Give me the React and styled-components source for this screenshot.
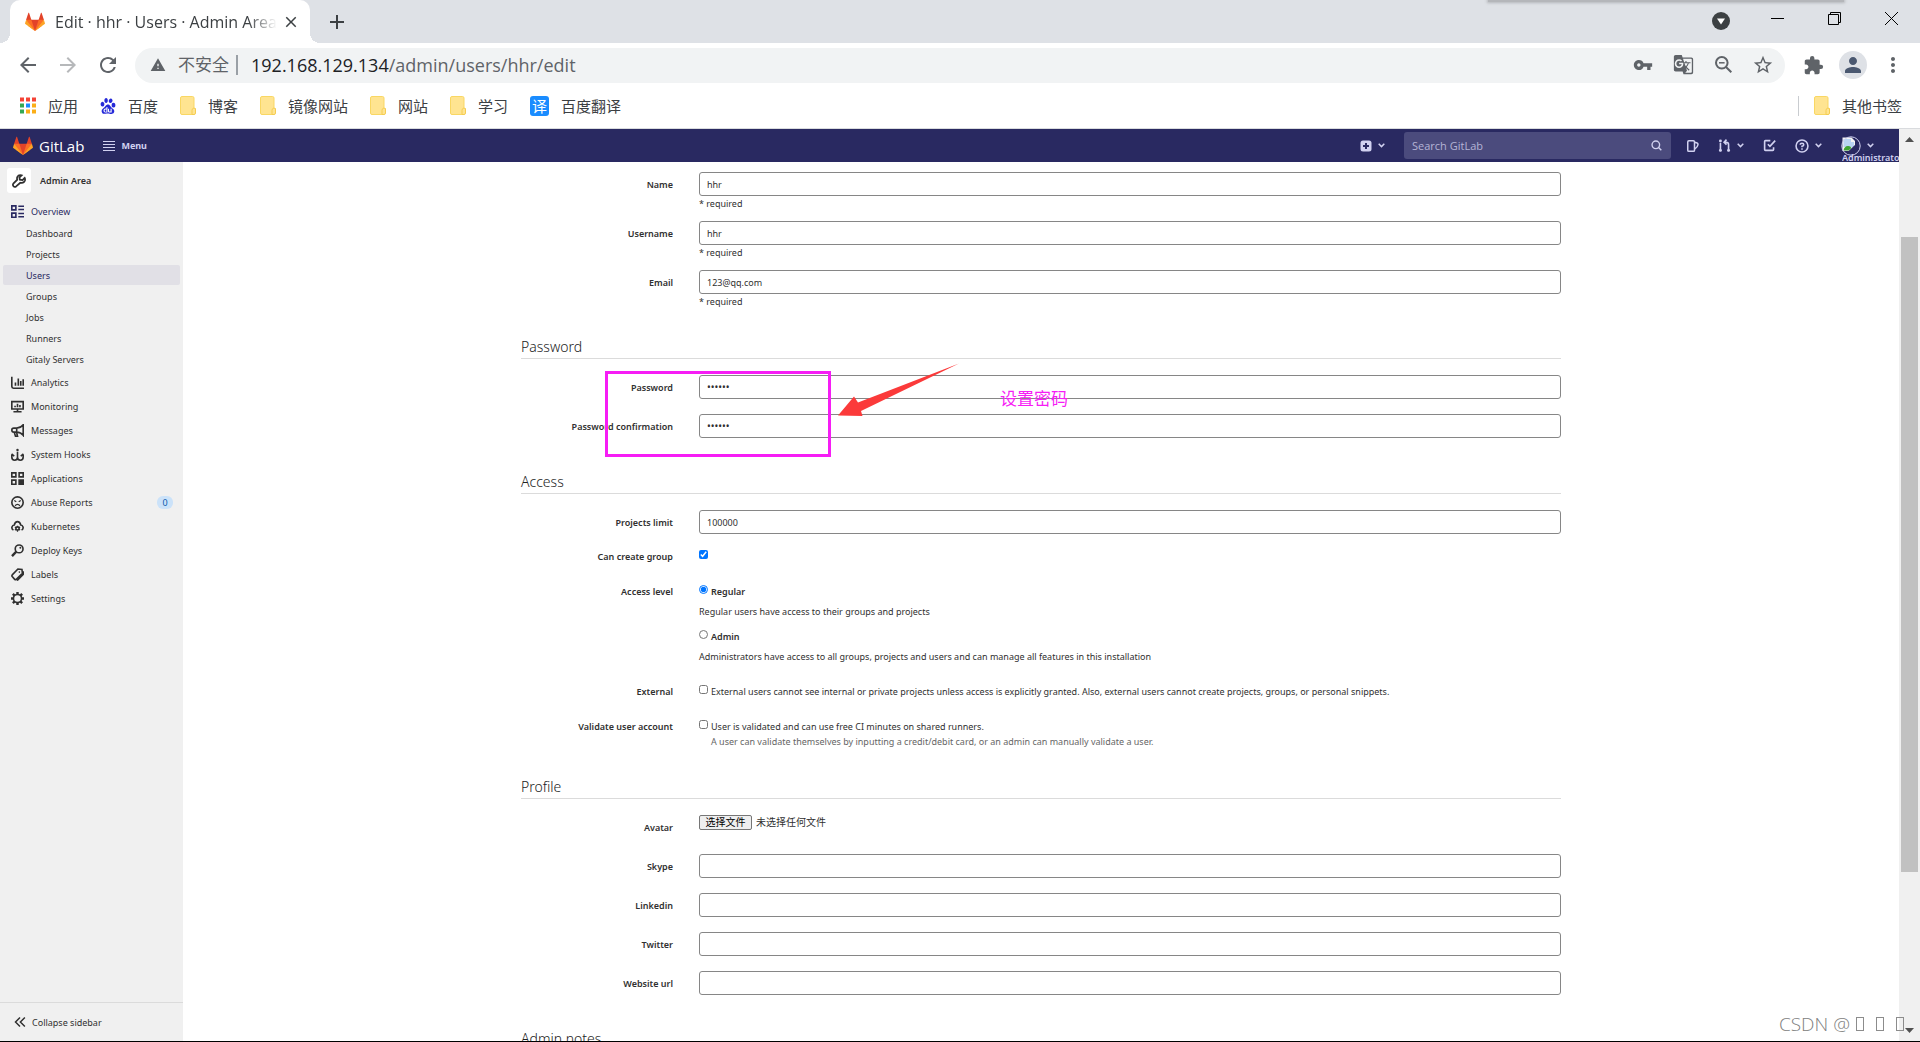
import { useRef } from "react";
import styled, { createGlobalStyle } from "styled-components";
import {
  MdArrowBack,
  MdArrowForward,
  MdRefresh,
  MdWarning,
  MdVpnKey,
  MdGTranslate,
  MdStarBorder,
  MdExtension,
  MdPerson,
  MdMoreVert,
  MdClose,
  MdAdd,
} from "react-icons/md";
import { SiBaidu } from "react-icons/si";

const GlobalStyle = createGlobalStyle`
  * {
    box-sizing: border-box;
  }

  body {
    margin: 0;
    overflow: hidden;
    background: #fff;
    font-family: "Open Sans", "Noto Sans CJK SC", sans-serif;
  }

  button {
    border: none;
    background: none;
    padding: 0;
    font: inherit;
    color: inherit;
  }

  a {
    color: inherit;
    text-decoration: none;
  }

  svg {
    flex: none;
    display: block;
  }
`;

const Window = styled.div`
  position: relative;
  display: flex;
  flex-direction: column;
  height: 100vh;
  overflow: hidden;
  border-bottom: 1px solid #000;
`;

/* browser chrome */

const TabStrip = styled.div`
  display: flex;
  flex: none;
  height: 43px;
  padding-left: 10px;
  background: #dee1e6;
  color: #3c4043;
`;

const StripShadow = styled.div`
  position: absolute;
  top: 0;
  right: 76px;
  width: 356px;
  height: 2px;
  background: #b4b6ba;
  box-shadow: 0 0 3px 1px #b4b6ba;
`;

const Tab = styled.div`
  position: relative;
  display: flex;
  align-items: center;
  width: 300px;
  padding: 0 12px 0 15px;
  border-radius: 10px 10px 0 0;
  background: #fff;

  &::before,
  &::after {
    content: "";
    position: absolute;
    bottom: 0;
    width: 10px;
    height: 10px;
  }

  &::before {
    left: -10px;
    background: radial-gradient(circle at 0 0, transparent 10px, #fff 10px);
  }

  &::after {
    right: -10px;
    background: radial-gradient(circle at 100% 0, transparent 10px, #fff 10px);
  }
`;

const TabTitle = styled.span`
  flex: 1;
  margin: 0 5px 0 10px;
  white-space: nowrap;
  font-size: 16px;
  line-height: 24px;
  mask-image: linear-gradient(to right, #000 87%, transparent);
`;

const NewTab = styled.button`
  display: flex;
  align-items: center;
  margin-left: 15px;
`;

const WindowButtons = styled.div`
  display: flex;
  align-items: center;
  margin-left: auto;
  height: 37px;
`;

const WindowButton = styled.button`
  display: flex;
  align-items: center;
  justify-content: center;
  width: 57px;
  height: 37px;
  color: #000;
`;

const TabSearch = styled(WindowButton)`
  height: 43px;
  padding-top: 5px;
`;

const Toolbar = styled.div`
  display: flex;
  flex: none;
  align-items: center;
  height: 45px;
  padding: 0 7px 0 8px;
  color: #5f6368;
`;

const ToolButton = styled.button`
  display: flex;
  flex: none;
  align-items: center;
  justify-content: center;
  width: 40px;
  height: 35px;
  padding-bottom: 1px;
  opacity: ${(props) => (props.disabled ? 0.45 : 1)};
  color: #5f6368;
`;

const Omnibox = styled.div`
  display: flex;
  flex: 1;
  align-items: center;
  height: 35px;
  margin: 0 8px 0 7px;
  padding: 0 2px 1px 15px;
  border-radius: 18px;
  background: #f1f3f4;
  font-size: 18px;
  line-height: 24px;
`;

const Insecure = styled.span`
  margin-left: 12px;
  padding-right: 7px;
  border-right: 2px solid #9aa0a6;
  font-size: 17px;
  line-height: 20px;
`;

const Url = styled.span`
  flex: 1;
  margin-left: 13px;
  padding-bottom: 1px;
  color: #5f6368;

  b {
    font-weight: 400;
    color: #202124;
  }
`;

const Profile = styled.span`
  display: flex;
  align-items: center;
  justify-content: center;
  width: 28px;
  height: 28px;
  border-radius: 50%;
  background: #dee1e6;
  color: #4a5870;
`;

const Bookmarks = styled.nav`
  display: flex;
  flex: none;
  align-items: center;
  gap: 22px;
  height: 41px;
  padding: 0 18px 5px 20px;
  border-bottom: 1px solid #d9dbde;
  color: #3c4043;
  font-size: 15px;
  line-height: 20px;
`;

const Bookmark = styled.a`
  display: flex;
  align-items: center;
  gap: 12px;
`;

const OtherBookmarks = styled(Bookmark)`
  margin-left: auto;
  height: 20px;
  padding-left: 15px;
  border-left: 1px solid #c9ccd0;
`;

const TranslateBadge = styled.span`
  width: 19px;
  border-radius: 3px;
  background: #1a8cff;
  color: #fff;
  text-align: center;
`;

/* page */

const Viewport = styled.div`
  display: flex;
  flex: 1;
  min-height: 0;
  font-family: "Noto Sans", "Noto Sans CJK SC", sans-serif;
`;

const Page = styled.div`
  display: flex;
  flex: 1;
  flex-direction: column;
  min-width: 0;
`;

const Navbar = styled.header`
  display: flex;
  flex: none;
  align-items: center;
  height: 33px;
  padding: 0 25px 0 13px;
  background: #292961;
  color: #d1d1f0;
`;

const Brand = styled.a`
  display: flex;
  align-items: center;
  gap: 6px;
  color: #fff;
  font-family: "Open Sans", sans-serif;
  font-size: 15px;
`;

const MenuButton = styled.button`
  display: flex;
  align-items: center;
  gap: 6px;
  margin-left: 19px;
  font-size: 9px;
  font-weight: 700;
`;

const NavActions = styled.div`
  display: flex;
  align-items: center;
  margin-left: auto;
`;

const NavButton = styled.button`
  display: flex;
  align-items: center;
  gap: 6px;
  margin-right: 19px;
`;

const SearchBox = styled.label`
  display: flex;
  align-items: center;
  width: 267px;
  height: 27px;
  margin-right: 16px;
  padding: 0 9px 0 8px;
  border-radius: 3px;
  background: #4b4b7d;

  input {
    flex: 1;
    min-width: 0;
    padding: 0;
    border: none;
    outline: none;
    background: none;
    color: #d1d1f0;
    font: 11px "Open Sans", sans-serif;
  }

  input::placeholder {
    color: #b4b4d6;
  }
`;

const UserButton = styled.button`
  position: relative;
  display: flex;
  align-items: center;
  gap: 6px;
`;

const AvatarAlt = styled.span`
  position: absolute;
  top: 16px;
  left: 1px;
  width: 57px;
  overflow: hidden;
  text-align: left;
  font-size: 9px;
  font-weight: 600;
  line-height: 11px;
`;

const Body = styled.div`
  display: flex;
  flex: 1;
  min-height: 0;
`;

const Sidebar = styled.aside`
  display: flex;
  flex: none;
  flex-direction: column;
  width: 183px;
  background: #f0f0f0;
  color: #303030;
  font-size: 9px;
`;

const SidebarTitle = styled.a`
  display: flex;
  align-items: center;
  gap: 9px;
  height: 37px;
  padding-left: 7px;
  font-weight: 600;
`;

const TitleIcon = styled.span`
  display: flex;
  align-items: center;
  justify-content: center;
  width: 24px;
  height: 25px;
  border-radius: 3px;
  background: #fff;
`;

const List = styled.ul`
  margin: 0;
  padding: 0;
  list-style: none;
`;

const Item = styled.a`
  display: flex;
  align-items: center;
  gap: 7px;
  height: 24px;
  padding: 0 10px 0 11px;
  color: ${(props) => (props.$active ? "#292961" : "inherit")};
`;

const Badge = styled.span`
  width: 16px;
  margin-left: auto;
  border-radius: 6px;
  background: #cbe2f9;
  color: #0b5cad;
  text-align: center;
  line-height: 13px;
`;

const SubItem = styled.a`
  display: block;
  height: 20px;
  margin: 0 3px 1px;
  padding-left: 23px;
  border-radius: 2px;
  background: ${(props) => (props.$active ? "#e1e0e6" : "none")};
  color: ${(props) => (props.$active ? "#292961" : "inherit")};
  line-height: 21px;
`;

const Collapse = styled.button`
  display: flex;
  align-items: center;
  gap: 6px;
  height: 39px;
  margin-top: auto;
  padding-left: 14px;
  border-top: 1px solid #dbdbdb;
`;

const Main = styled.main`
  flex: 1;
  min-width: 0;
  overflow: hidden;
  padding: 10px 16px 0;
`;

const Form = styled.form`
  max-width: 1040px;
  margin: 0 auto;
  color: #303030;
  font-size: 9px;
`;

const Section = styled.section`
  position: relative;
  margin-top: ${(props) => props.$top || 0}px;
`;

const Heading = styled.h2`
  margin: 0 0 16px;
  border-bottom: 1px solid #dbdbdb;
  color: #222;
  font-size: 14px;
  font-weight: 300;
  line-height: 23px;
`;

const Fields = styled.div`
  display: grid;
  gap: ${(props) => props.$gap || 13}px;
`;

const Row = styled.div`
  display: grid;
  grid-template-columns: 152px 1fr;
  column-gap: 26px;
  padding-bottom: ${(props) => (props.$choice ? 7 : 0)}px;
`;

const Caption = styled.label`
  text-align: right;
  font-weight: 600;
  line-height: ${(props) => (props.$choice ? 15 : 26)}px;
`;

const Input = styled.input`
  display: block;
  width: 100%;
  height: 24px;
  padding: 0 7px;
  border: 1px solid #868686;
  border-radius: 3px;
  outline: none;
  background: #fff;
  color: #303030;
  font: ${(props) => (props.type === "password" ? 10 : 9)}px "Noto Sans", sans-serif;
`;

const Required = styled.span`
  display: block;
  line-height: 16px;
`;

const Choice = styled.label`
  display: flex;
  align-items: flex-start;
  gap: 3px;
  font-weight: ${(props) => (props.$strong ? 600 : 400)};
  line-height: 15px;
`;

const Tick = styled.input`
  width: 9px;
  height: 9px;
  margin: 1px 0 0;
  accent-color: #0075ff;
`;

const Help = styled.p`
  margin: 5px 0 0;
  line-height: 15px;
`;

const Note = styled.p`
  margin: 0 0 0 12px;
  color: #666;
  line-height: 15px;
`;

const Level = styled.div`
  & + & {
    margin-top: 10px;
  }
`;

const FileField = styled.div`
  display: flex;
  align-items: flex-start;
  gap: 4px;
  font-size: 10px;
  line-height: 14px;

  input {
    display: none;
  }

  button {
    width: 53px;
    border: 1px solid #767676;
    border-radius: 2px;
    background: #efefef;
    color: #000;
    line-height: 13px;
  }
`;

/* marks laid over the password fields */

const Frame = styled.div`
  position: absolute;
  top: 36px;
  left: 84px;
  width: 226px;
  height: 86px;
  border: 3px solid #f61df5;
  pointer-events: none;
`;

const Arrow = styled.svg`
  position: absolute;
  top: 28px;
  left: 317px;
  pointer-events: none;
`;

const Remark = styled.span`
  position: absolute;
  top: 52px;
  left: 479px;
  color: #f61df5;
  font-size: 17px;
  line-height: 24px;
`;

const Scrollbar = styled.div`
  display: flex;
  flex: none;
  flex-direction: column;
  align-items: center;
  width: 21px;
  background: #f0f0f0;
`;

const ScrollArrow = styled.svg`
  margin: 8px 0;
`;

const Track = styled.div`
  flex: ${(props) => props.$grow};
`;

const Thumb = styled(Track)`
  width: 17px;
  background: #c1c1c1;
`;

const Watermark = styled.div`
  position: absolute;
  right: 16px;
  bottom: 4px;
  display: flex;
  gap: 12px;
  color: #808080;
  font-size: 19px;
  font-weight: 300;
  line-height: 26px;

  i {
    width: 8px;
    height: 14px;
    margin-top: 6px;
    border: 1px solid #8c8c8c;
  }

  i:first-of-type {
    margin-left: -6px;
  }
`;

const Tanuki = ({ size = 20 }) => (
  <svg width={size} height={size} viewBox="0 0 36 36">
    <path fill="#e24329" d="M2 14l9.38 9v-9l-4-12.28c-.205-.632-1.176-.632-1.38 0z" />
    <path fill="#e24329" d="M34 14l-9.38 9v-9l4-12.28c.205-.632 1.176-.632 1.38 0z" />
    <path fill="#e24329" d="M18 34.38L3 14h30z" />
    <path fill="#fc6d26" d="M18 34.38L11.38 14H2l4 11z" />
    <path fill="#fc6d26" d="M18 34.38L24.62 14H34l-4 11z" />
    <path fill="#fca326" d="M2 14L.1 20.16c-.18.565 0 1.2.5 1.56L18 34.38z" />
    <path fill="#fca326" d="M34 14l1.9 6.16c.18.565 0 1.2-.5 1.56L18 34.38z" />
  </svg>
);

const Folder = () => (
  <svg width="16" height="19" viewBox="0 0 16 19">
    <path fill="#ffe491" stroke="#f9d763" d="M2 .5h10.500q1.500 0 1.500 1.500V18.500H2Q.5 18.500.5 17V2Q.5.5 2 .5z" />
    <path fill="#ffe491" stroke="#f5cc50" d="M12 18.500V14.500q0-1.500 1.500-2.500l2 .5v4.500q0 1.500-1.500 1.500z" />
  </svg>
);

const Apps = () => {
  const colors = ["#f44336", "#f44336", "#f44336", "#34a853", "#1a8cff", "#fbae17", "#34a853", "#fbae17", "#fbae17"];
  return (
    <svg width="16" height="17" viewBox="0 0 16 17">
      {colors.map((color, i) => (
        <rect key={i} x={(i % 3) * 6} y={Math.floor(i / 3) * 6 + 0.5} width="4" height="4" fill={color} />
      ))}
    </svg>
  );
};

const Chevron = () => (
  <svg width="7" height="5" viewBox="0 0 7 5" fill="none" stroke="currentColor" strokeWidth="1.500">
    <path d="M.7.8l2.800 2.800L6.300.8" />
  </svg>
);

// 16px grid icons drawn with strokes
const Icon = ({ size = 13, width = 2, children }) => (
  <svg width={size} height={size} viewBox="0 0 16 16" fill="none" stroke="currentColor" strokeWidth={width}>
    {children}
  </svg>
);

const icons = {
  overview: (
    <Icon>
      <path d="M1 1h5v5H1zM1 10h5v5H1zM9 1.500h7M9 5.500h7M9 10.500h7M9 14.500h7" />
    </Icon>
  ),
  analytics: (
    <Icon>
      <path d="M1 1v12q0 2 2 2h13M5.500 12V8M9 12V3M12 12V6M15 12V4" />
    </Icon>
  ),
  monitoring: (
    <Icon>
      <path d="M1 2h14v9H1zM8 11v3M3 14.500h10M5 9V7M8 9V4.500M11 9V6" />
    </Icon>
  ),
  messages: (
    <Icon>
      <path d="M15 1v13q-3-4-8-4H3.500q-2.500 0-2.500-2.500T3.500 5H7q5 0 8-4zM7 5v5M4 10l1.500 5H8l-1-4" />
    </Icon>
  ),
  hooks: (
    <Icon>
      <path d="M8 4.500V15M1 8.500V11q0 4 3.500 4T8 11.500Q8 15 11.500 15T15 11V8.500M0 10l1.500-2L4 10M16 10l-1.500-2L12 10" />
      <circle cx="8" cy="2.500" r="1.500" fill="currentColor" stroke="none" />
    </Icon>
  ),
  applications: (
    <Icon>
      <path d="M1 1h5v5H1zM10 1h5v5h-5zM1 10h5v5H1z" />
      <path fill="currentColor" d="M10 10h5v5h-5z" />
    </Icon>
  ),
  abuse: (
    <Icon>
      <circle cx="8" cy="8" r="7" />
      <path strokeWidth="1.500" d="M4 5.500l2.500 1.500M12 5.500L9.500 7M5 12q3-3.500 6 0" />
    </Icon>
  ),
  kubernetes: (
    <Icon>
      <path d="M3 12.500Q.5 11 1.200 8.500 2 6.300 4 6.200 5 2 8 2t4 4.200q2 .1 2.800 2.300.7 2.500-1.800 4" />
      <circle cx="8" cy="10.500" r="2" />
      <path strokeWidth="1.500" d="M8 7v1.500M8 12.500v2M4.800 8.800l1.500.8M9.800 11.500l1.500.8M11.200 8.800l-1.500.8M6.200 11.500l-1.500.8" />
    </Icon>
  ),
  keys: (
    <Icon>
      <circle cx="10" cy="6" r="4.800" />
      <path strokeWidth="3" d="M6.500 9.500L1.200 14.800" />
      <circle cx="11.500" cy="4.500" r="1.200" fill="currentColor" stroke="none" />
    </Icon>
  ),
  labels: (
    <Icon>
      <path d="M1.500 8.500L8.500 1.200l5 .5.5 5L6.500 14q-1 .8-2 0L1.500 10.500q-.8-1 0-2zM7.500 15.500L15 8V4" />
      <circle cx="10.300" cy="5" r="1" fill="currentColor" stroke="none" />
    </Icon>
  ),
  settings: (
    <Icon>
      <circle cx="8" cy="8" r="5" />
      <path strokeWidth="3" d="M8 0v3M8 13v3M0 8h3M13 8h3M2.300 2.300l2 2M11.700 11.700l2 2M13.700 2.300l-2 2M4.300 11.700l-2 2" />
    </Icon>
  ),
};

const overviewLinks = ["Dashboard", "Projects", "Users", "Groups", "Jobs", "Runners", "Gitaly Servers"];

const sidebarLinks = [
  { icon: "analytics", name: "Analytics" },
  { icon: "monitoring", name: "Monitoring" },
  { icon: "messages", name: "Messages" },
  { icon: "hooks", name: "System Hooks" },
  { icon: "applications", name: "Applications" },
  { icon: "abuse", name: "Abuse Reports", count: 0 },
  { icon: "kubernetes", name: "Kubernetes" },
  { icon: "keys", name: "Deploy Keys" },
  { icon: "labels", name: "Labels" },
  { icon: "settings", name: "Settings" },
];

const bookmarks = [
  { icon: <Apps />, name: "应用" },
  { icon: <SiBaidu size={16} color="#2529d8" />, name: "百度" },
  { icon: <Folder />, name: "博客" },
  { icon: <Folder />, name: "镜像网站" },
  { icon: <Folder />, name: "网站" },
  { icon: <Folder />, name: "学习" },
  { icon: <TranslateBadge>译</TranslateBadge>, name: "百度翻译" },
];

function Field({ id, label, required, ...rest }) {
  return (
    <Row>
      <Caption htmlFor={id}>{label}</Caption>
      <div>
        <Input id={id} type="text" {...rest} />
        {required ? <Required>* required</Required> : null}
      </div>
    </Row>
  );
}

function BrowserChrome() {
  return (
    <>
      <TabStrip>
        <StripShadow />
        <Tab>
          <Tanuki />
          <TabTitle>Edit · hhr · Users · Admin Area</TabTitle>
          <button aria-label="Close tab">
            <MdClose size={18} />
          </button>
        </Tab>
        <NewTab aria-label="New tab">
          <MdAdd size={24} />
        </NewTab>
        <WindowButtons>
          <TabSearch aria-label="Search tabs">
            <svg width="18" height="18" viewBox="0 0 18 18">
              <circle cx="9" cy="9" r="9" fill="#3c4043" />
              <path fill="#fff" d="M5 6.500h8L9 12.500z" />
            </svg>
          </TabSearch>
          <WindowButton aria-label="Minimize">
            <svg width="13" height="13" stroke="#000">
              <path d="M0 6.500h13" />
            </svg>
          </WindowButton>
          <WindowButton aria-label="Restore">
            <svg width="13" height="13" fill="none" stroke="#000">
              <path d="M.5 2.500h10v10H.5zM2.500 2.500v-2h10v10h-2" />
            </svg>
          </WindowButton>
          <WindowButton aria-label="Close">
            <svg width="13" height="13" stroke="#000">
              <path d="M0 0l13 13M13 0L0 13" />
            </svg>
          </WindowButton>
        </WindowButtons>
      </TabStrip>
      <Toolbar>
        <ToolButton aria-label="Back">
          <MdArrowBack size={24} />
        </ToolButton>
        <ToolButton aria-label="Forward" disabled>
          <MdArrowForward size={24} />
        </ToolButton>
        <ToolButton aria-label="Reload">
          <MdRefresh size={24} />
        </ToolButton>
        <Omnibox>
          <MdWarning size={16} />
          <Insecure>不安全</Insecure>
          <Url>
            <b>192.168.129.134</b>/admin/users/hhr/edit
          </Url>
          <ToolButton aria-label="Passwords">
            <MdVpnKey size={20} />
          </ToolButton>
          <ToolButton aria-label="Translate">
            <MdGTranslate size={21} />
          </ToolButton>
          <ToolButton aria-label="Zoom">
            <svg width="17" height="17" viewBox="0 0 17 17" fill="none" stroke="#5f6368" strokeWidth="2">
              <circle cx="6.800" cy="6.800" r="5.800" />
              <path d="M11 11l5.300 5.300" />
              <path strokeWidth="1.500" d="M4 6.800h5.600" />
            </svg>
          </ToolButton>
          <ToolButton aria-label="Bookmark">
            <MdStarBorder size={22} />
          </ToolButton>
        </Omnibox>
        <ToolButton aria-label="Extensions">
          <MdExtension size={21} />
        </ToolButton>
        <ToolButton aria-label="Profile">
          <Profile>
            <MdPerson size={24} />
          </Profile>
        </ToolButton>
        <ToolButton aria-label="More">
          <MdMoreVert size={24} />
        </ToolButton>
      </Toolbar>
      <Bookmarks>
        {bookmarks.map((item) => (
          <Bookmark href="#" key={item.name}>
            {item.icon}
            {item.name}
          </Bookmark>
        ))}
        <OtherBookmarks href="#">
          <Folder />
          其他书签
        </OtherBookmarks>
      </Bookmarks>
    </>
  );
}

function TopNav() {
  return (
    <Navbar>
      <Brand href="#">
        <Tanuki />
        GitLab
      </Brand>
      <MenuButton>
        <svg width="12" height="10" stroke="currentColor" strokeWidth="1">
          <path d="M0 .5h12M0 3.500h12M0 6.500h12M0 9.500h12" />
        </svg>
        Menu
      </MenuButton>
      <NavActions>
        <NavButton aria-label="New">
          <svg width="12" height="12" viewBox="0 0 12 12">
            <rect x=".5" y=".5" width="11" height="11" rx="2.500" fill="#d1d1f0" />
            <path stroke="#292961" strokeWidth="2" d="M6 3v6M3 6h6" />
          </svg>
          <Chevron />
        </NavButton>
        <SearchBox>
          <input type="text" placeholder="Search GitLab" aria-label="Search GitLab" />
          <Icon size={11}>
            <circle cx="7" cy="7" r="5.500" />
            <path d="M11 11l4 4" />
          </Icon>
        </SearchBox>
        <NavButton aria-label="Issues">
          <Icon size={12}>
            <path d="M2.500 1h6q1.500 0 1.500 1.500v11q0 1.500-1.500 1.500h-6Q1 15 1 13.500v-11Q1 1 2.500 1zM10.500 3l3 1q1.500.5 1 2.500-.5 3-4 5.500" />
          </Icon>
        </NavButton>
        <NavButton aria-label="Merge requests">
          <Icon size={13}>
            <path d="M3 5v10M13 15V7q0-3-3-3H8M10.500.8L7.500 4l3 3" />
            <circle cx="3" cy="2.500" r="1.800" fill="currentColor" stroke="none" />
            <circle cx="3" cy="14" r="1.800" fill="currentColor" stroke="none" />
            <circle cx="13" cy="14" r="1.800" fill="currentColor" stroke="none" />
          </Icon>
          <Chevron />
        </NavButton>
        <NavButton aria-label="To-Do List">
          <Icon size={13}>
            <path d="M9 2H3Q2 2 2 3v10q0 1 1 1h9q1 0 1-1v-3M6 6.500L8.500 9 15 2" />
          </Icon>
        </NavButton>
        <NavButton aria-label="Help">
          <Icon size={14}>
            <circle cx="8" cy="8" r="6.800" strokeWidth="1.800" />
            <path strokeWidth="1.800" d="M6 6.500Q6 4.800 8 4.800t2 1.700Q10 7.700 8 8.300V9.500M8 10.700v1.600" />
          </Icon>
          <Chevron />
        </NavButton>
        <UserButton aria-label="Administrator">
          <svg width="20" height="20" viewBox="0 0 20 20">
            <path fill="#f4f4f4" d="M1.500 1.500h9l3.500 3.500v10h-12.500z" />
            <path fill="#b9d4f3" d="M2.500 3h7.500v3h3v5H2.500z" />
            <path fill="#3fa535" d="M2.500 14.500q1-5 5-4.500 2 0 3 2l-3 2.500z" />
            <path fill="#292961" d="M6 16.500L15 8v8z" />
            <circle cx="10" cy="10" r="9.200" fill="none" stroke="#d1d1f0" />
          </svg>
          <Chevron />
          <AvatarAlt>Administrator</AvatarAlt>
        </UserButton>
      </NavActions>
    </Navbar>
  );
}

function AdminSidebar() {
  return (
    <Sidebar>
      <SidebarTitle href="#">
        <TitleIcon>
          <Icon size={14}>
            <path d="M14.500 4.500L12 7 9 6.500 8.500 4 11 1.500Q7.500.5 6 3.500q-.5 1.500 0 3l-4.500 4.500q-1 1.500.2 3t3 .2L9.500 10q4 1 5.300-2.500.4-1.500-.3-3z" />
          </Icon>
        </TitleIcon>
        Admin Area
      </SidebarTitle>
      <nav>
        <Item href="#" $active>
          {icons.overview}
          Overview
        </Item>
        <List>
          {overviewLinks.map((name) => (
            <li key={name}>
              <SubItem href="#" $active={name === "Users"}>
                {name}
              </SubItem>
            </li>
          ))}
        </List>
        <List>
          {sidebarLinks.map((link) => (
            <li key={link.name}>
              <Item href="#">
                {icons[link.icon]}
                {link.name}
                {link.count !== undefined ? <Badge>{link.count}</Badge> : null}
              </Item>
            </li>
          ))}
        </List>
      </nav>
      <Collapse>
        <Icon size={12}>
          <path d="M8 2L2 8l6 6M14.500 2l-6 6 6 6" />
        </Icon>
        Collapse sidebar
      </Collapse>
    </Sidebar>
  );
}

function AvatarField() {
  const fileInput = useRef(null);

  return (
    <Row>
      <Caption htmlFor="avatar">Avatar</Caption>
      <FileField>
        <input type="file" id="avatar" ref={fileInput} />
        <button type="button" onClick={() => fileInput.current.click()}>
          选择文件
        </button>
        未选择任何文件
      </FileField>
    </Row>
  );
}

function UserForm() {
  return (
    <Form>
      <Section>
        <Fields $gap={9}>
          <Field id="name" label="Name" defaultValue="hhr" required />
          <Field id="username" label="Username" defaultValue="hhr" required />
          <Field id="email" label="Email" defaultValue="123@qq.com" required />
        </Fields>
      </Section>
      <Section $top={25}>
        <Heading>Password</Heading>
        <Fields>
          <Field id="password" label="Password" type="password" defaultValue="123456" />
          <Field id="confirmation" label="Password confirmation" type="password" defaultValue="123456" />
        </Fields>
        <Frame />
        <Arrow width="122" height="54" viewBox="0 0 122 54">
          <path fill="#fb3a3a" d="M0 52.500L16 33.500l4 6L121 .5 23 48l1.500 5z" />
        </Arrow>
        <Remark>设置密码</Remark>
      </Section>
      <Section $top={30}>
        <Heading>Access</Heading>
        <Fields>
          <Field id="limit" label="Projects limit" defaultValue="100000" />
          <Row $choice>
            <Caption $choice htmlFor="group">
              Can create group
            </Caption>
            <Tick type="checkbox" id="group" defaultChecked />
          </Row>
          <Row $choice>
            <Caption $choice as="span">
              Access level
            </Caption>
            <div>
              <Level>
                <Choice $strong>
                  <Tick type="radio" name="level" defaultChecked />
                  Regular
                </Choice>
                <Help>Regular users have access to their groups and projects</Help>
              </Level>
              <Level>
                <Choice $strong>
                  <Tick type="radio" name="level" />
                  Admin
                </Choice>
                <Help>
                  Administrators have access to all groups, projects and users and can manage all features in this
                  installation
                </Help>
              </Level>
            </div>
          </Row>
          <Row $choice>
            <Caption $choice htmlFor="external">
              External
            </Caption>
            <Choice>
              <Tick type="checkbox" id="external" />
              External users cannot see internal or private projects unless access is explicitly granted. Also,
              external users cannot create projects, groups, or personal snippets.
            </Choice>
          </Row>
          <Row $choice>
            <Caption $choice htmlFor="validate">
              Validate user account
            </Caption>
            <div>
              <Choice>
                <Tick type="checkbox" id="validate" />
                User is validated and can use free CI minutes on shared runners.
              </Choice>
              <Note>
                A user can validate themselves by inputting a credit/debit card, or an admin can manually validate a
                user.
              </Note>
            </div>
          </Row>
        </Fields>
      </Section>
      <Section $top={19}>
        <Heading>Profile</Heading>
        <Fields>
          <AvatarField />
          <Field id="skype" label="Skype" />
          <Field id="linkedin" label="Linkedin" />
          <Field id="twitter" label="Twitter" />
          <Field id="website" label="Website url" />
        </Fields>
      </Section>
      <Section $top={30}>
        <Heading>Admin notes</Heading>
      </Section>
    </Form>
  );
}

export default function App() {
  return (
    <Window>
      <GlobalStyle />
      <BrowserChrome />
      <Viewport>
        <Page>
          <TopNav />
          <Body>
            <AdminSidebar />
            <Main>
              <UserForm />
            </Main>
          </Body>
        </Page>
        <Scrollbar>
          <ScrollArrow width="9" height="5">
            <path fill="#505050" d="M0 5l4.500-5L9 5z" />
          </ScrollArrow>
          <Track $grow={87} />
          <Thumb $grow={636} />
          <Track $grow={148} />
          <ScrollArrow width="9" height="5">
            <path fill="#505050" d="M0 0l4.500 5L9 0z" />
          </ScrollArrow>
        </Scrollbar>
      </Viewport>
      <Watermark>
        CSDN @<i />
        <i />
        <i />
      </Watermark>
    </Window>
  );
}
